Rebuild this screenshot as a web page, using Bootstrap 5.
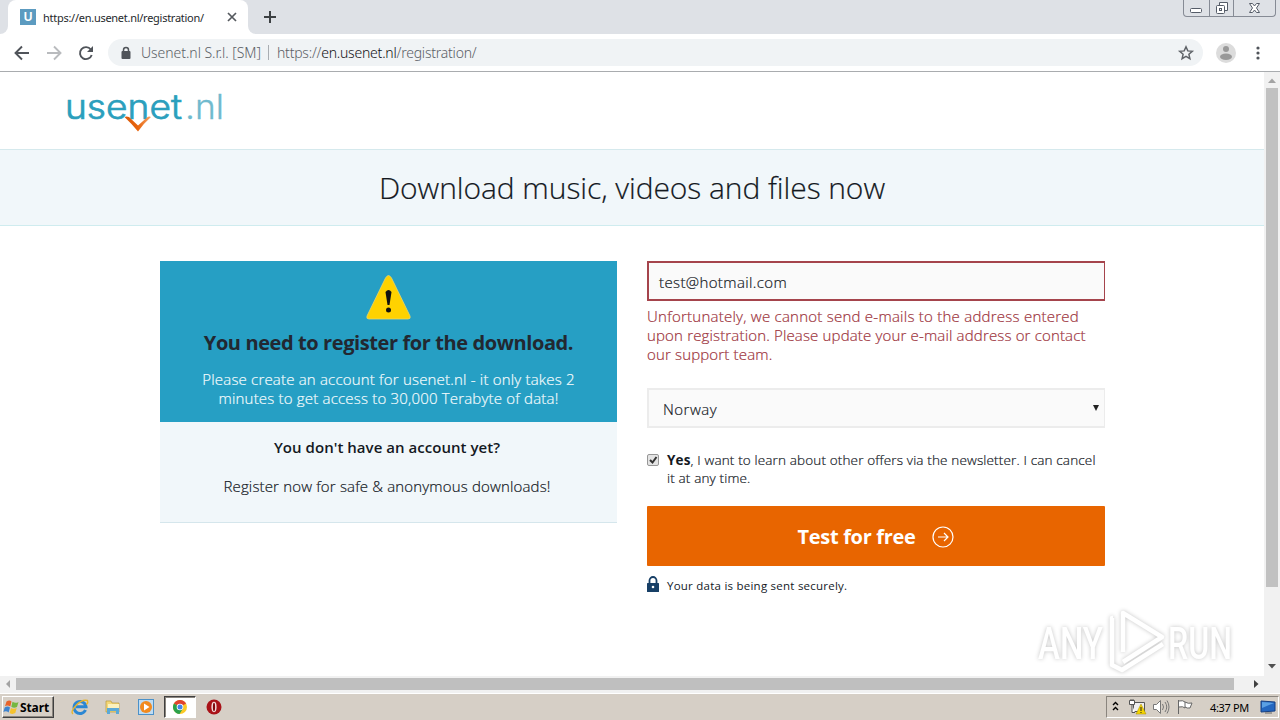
<!DOCTYPE html>
<html lang="en">
<head>
    <meta charset="UTF-8">
    <meta name="viewport" content="width=device-width, initial-scale=1.0">
    <title>Registration</title>
    <link href="https://cdn.jsdelivr.net/npm/bootstrap@5.3.0/dist/css/bootstrap.min.css" rel="stylesheet">
    <style>
        body { width: 1280px; height: 720px; overflow: hidden; background: #fff; color: #14191f; font-family: "Open Sans", "Noto Sans", sans-serif; font-weight: 300; font-size: 15px; line-height: 19px; }
        svg { display: block; flex: none; overflow: visible; }
        .ui-font { font-family: "Noto Sans", "DejaVu Sans", sans-serif; }
        .fit { display: inline-block; white-space: nowrap; }
        main { -webkit-text-stroke: .2px; }
        main b, main h2, main .fw-semibold, .btn-free, .secure-row, main svg { -webkit-text-stroke: 0; }

        /* Browser */
        .tab-strip { height: 34px; background: #dee1e6; }
        .tab-corner { flex: none; width: 8px; background: #fff; }
        .tab-corner i { display: block; height: 34px; background: #dee1e6; border-radius: 0 0 8px 0; }
        .tab-corner.right-side i { border-radius: 0 0 0 8px; }
        .browser-tab { flex: none; width: 240px; height: 34px; padding: 0 8px 0 12px; background: #fff; border-radius: 8px 8px 0 0; font-size: 11px; font-weight: 400; color: #26292c; letter-spacing: -.27px; }
        .site-icon { flex: none; width: 16px; height: 16px; margin-right: 7px; background: #5c9bc0; color: #fff; font: bold 12px/16px "Liberation Sans", sans-serif; text-align: center; }
        .new-tab { margin: 8px 0 0 8px; }
        .win-buttons { width: 93px; height: 17px; margin-right: 4px; border: 1px solid #868b95; border-top: 0; border-radius: 0 0 4px 4px; }
        .win-buttons > span { width: 25px; }
        .win-buttons > span + span { border-left: 1px solid #868b95; }
        .win-buttons > span:last-child { width: 42px; }
        .toolbar-row { height: 38px; border-bottom: 1px solid #a9acaf; }
        .address-bar { width: 1095px; height: 27px; margin-left: 15px; padding: 0 9px 0 13px; border-radius: 14px; background: #f0f3f5; font-size: 14px; color: #5b6066; }
        .owner-name { margin-left: 10px; letter-spacing: -.04px; }
        .bar-line { width: 1px; height: 15px; background: #a9adb2; margin: 0 8px 0 7px; }
        .page-url { letter-spacing: -.22px; }
        .page-url span { color: #101114; }
        .avatar-icon { margin: 0 20px 0 13px; }

        /* Page */
        .viewport-row { height: 604px; }
        .site-head { height: 78px; border-bottom: 1px solid #d5e9ed; padding: 20px 0 0 64px; }
        .title-band { height: 76px; background: #f1f7fa; border-bottom: 1px solid #cfecef; }
        .title-band h1 { font-size: 30px; font-weight: 300; line-height: 36px; margin: 1px 0 0; letter-spacing: -.08px; }
        .content-area { padding: 35px 159px 0 160px; gap: 30px; }
        .info-col { width: 457px; }
        .info-blue { height: 161px; background: #269fc4; color: #f3fbfd; padding-top: 12px; letter-spacing: .19px; }
        .info-blue h2 { font-size: 20px; font-weight: 700; line-height: 26px; color: #222831; margin: 10px 0 14px; letter-spacing: -.4px; }
        .info-light { height: 101px; background: #f1f7fa; border-bottom: 1px solid #d5e6ec; padding: 16px 3px 0 0; letter-spacing: .16px; }
        .info-light .fw-semibold { margin-bottom: 20px; letter-spacing: .04px; }
        .form-col { width: 458px; }
        .mail-box { height: 40px; border: 2px solid #a5444c; border-right-width: 1px; background: #fafafa; padding: 2px 0 0 10px; letter-spacing: .38px; }
        .error-text { color: #9d343d; margin-top: 6px; height: 57px; letter-spacing: .16px; }
        .error-text .first-line { letter-spacing: .246px; }
        .country-box { height: 40px; margin-top: 24px; border: 2px solid #ececec; border-right-width: 1px; background: #fafafa; padding: 2px 5px 0 14px; letter-spacing: .48px; }
        .news-row { margin-top: 23px; height: 36px; font-size: 13.5px; line-height: 18px; letter-spacing: .15px; }
        .news-row b { font-weight: 700; }
        .tick-box { width: 12px; height: 12px; margin: 3px 8px 0 0; border: 1px solid #979797; border-radius: 2px; background: #e4e4e4; }
        .btn-free { height: 60px; margin-top: 19px; background: #e86500; color: #fff; font-size: 20px; font-weight: 700; border-radius: 1px; gap: 17px; letter-spacing: -.32px; }
        .btn-free svg { margin-top: 1px; }
        .secure-row { margin-top: 10px; font-size: 11.5px; font-weight: 400; gap: 8px; letter-spacing: .24px; }
        .secure-row svg { margin-top: -4px; }
        .watermark { position: absolute; left: 1030px; top: 603px; filter: drop-shadow(0 0 2px #c4c4c4); }

        /* Scrollbars */
        .v-scroll { flex: none; width: 16px; background: #f1f1f1; }
        .v-thumb { width: 12px; height: 499px; background: #c1c1c1; }
        .h-scroll { height: 17px; background: #f1f1f1; padding: 0 16px 2px 0; }
        .h-thumb { width: 1218px; height: 12px; background: #bfbfbf; }

        /* Taskbar */
        .task-bar { height: 27px; background: #d6cfc6; border-top: 1px solid #fff; color: #000; }
        .start-btn { width: 52px; height: 22px; margin: 0 17px 0 2px; border: 1px solid #fff; border-right-color: #404040; border-bottom-color: #404040; box-shadow: inset -1px -1px #8a857e; font-size: 12px; font-weight: 700; letter-spacing: -.1px; }
        .quick-icons { gap: 15px; }
        .active-app { width: 32px; height: 22px; margin: 0 10px 0 9px; background: #fff; border: 1px solid #404040; border-right-color: #fff; border-bottom-color: #fff; box-shadow: inset 1px 1px #8a857e; }
        .tray { width: 173px; height: 22px; margin-right: 1px; padding-right: 2px; border: 1px solid #8a857e; border-right-color: #fff; border-bottom-color: #fff; font-weight: 400; font-size: 11px; letter-spacing: -.33px; }
        .clock { margin: 0 11px 0 auto; }
    </style>
</head>
<body>
<!-- Tab strip -->
<div class="tab-strip d-flex ui-font">
    <div class="tab-corner"><i></i></div>
    <div class="browser-tab d-flex align-items-center">
        <div class="site-icon">U</div>
        <span class="fit">https://en.usenet.nl/registration/</span>
        <svg class="ms-auto" width="16" height="16" viewBox="0 0 16 16"><path d="M4 4l8 8M12 4l-8 8" stroke="#55595e" stroke-width="1.700"/></svg>
    </div>
    <div class="tab-corner right-side"><i></i></div>
    <svg class="new-tab" width="18" height="18" viewBox="0 0 18 18"><path d="M6 3v12M0 9h12" stroke="#3c4043" stroke-width="2"/></svg>
    <div class="win-buttons d-flex ms-auto">
        <span class="d-flex justify-content-center"><svg width="14" height="16"><rect x="1.500" y="8.500" width="11" height="4" rx="1" fill="#fff" stroke="#555c68"/></svg></span>
        <span class="d-flex justify-content-center"><svg width="14" height="16"><path d="M4.500 5.500v-3h8v8h-3" fill="#fff" stroke="#555c68"/><rect x="1.500" y="5.500" width="8" height="8" rx="1" fill="#fff" stroke="#555c68"/><rect x="4.500" y="8.500" width="2" height="2" fill="none" stroke="#555c68"/></svg></span>
        <span class="d-flex justify-content-center"><svg width="14" height="16"><path d="M1.500 3.500h3l2 2.500 2-2.500h3l-3 4.500 3 4.500h-3l-2-2.500-2 2.500h-3l3-4.500z" fill="#fff" stroke="#555c68"/></svg></span>
    </div>
</div>

<!-- Toolbar -->
<div class="toolbar-row d-flex align-items-center ui-font">
    <svg width="93" height="20" viewBox="0 0 93 20" fill="none" stroke-width="1.900">
        <path d="M29 10H16M22 3.500L15.500 10l6.500 6.500" stroke="#50545a"/>
        <path d="M47 10h13M54 3.500l6.500 6.500-6.500 6.500" stroke="#b9bbbe"/>
        <path d="M90.800 6.500A6 6 0 1 0 91.700 12" stroke="#50545a"/>
        <path d="M93 3v6h-6z" fill="#50545a"/>
    </svg>
    <div class="address-bar d-flex align-items-center">
        <svg width="10" height="14" viewBox="0 0 10 14"><path d="M2.500 6V4a2.500 2.500 0 0 1 5 0v2" fill="none" stroke="#50545a" stroke-width="1.500"/><rect x=".5" y="5" width="9" height="8" rx="1" fill="#50545a"/></svg>
        <span class="fit owner-name">Usenet.nl S.r.l. [SM]</span>
        <span class="bar-line"></span>
        <span class="fit page-url">https://<span>en.usenet.nl</span>/registration/</span>
        <svg class="ms-auto" width="16" height="16" viewBox="0 0 16 16"><path d="M8 1.800l1.800 4.100 4.500.4-3.400 3 1 4.400L8 11.400l-3.900 2.300 1-4.400-3.400-3 4.500-.4z" fill="none" stroke="#5f6368" stroke-width="1.500"/></svg>
    </div>
    <svg class="avatar-icon" width="20" height="20"><circle cx="10" cy="10" r="10" fill="#dcdcdc"/><circle cx="10" cy="6" r="3" fill="#999"/><ellipse cx="10" cy="13.800" rx="6" ry="3.200" fill="#999"/></svg>
    <svg width="4" height="16" fill="#50545a"><circle cx="2" cy="3" r="1.600"/><circle cx="2" cy="8" r="1.600"/><circle cx="2" cy="13" r="1.600"/></svg>
</div>

<div class="viewport-row d-flex">
    <main class="flex-grow-1">
        <div class="site-head">
            <svg width="164" height="44" viewBox="0 0 164 44" font-family="Inter, sans-serif" font-weight="300" font-size="34">
                <defs><linearGradient id="arrowFill"><stop offset="0" stop-color="#d95a0b"/><stop offset=".5" stop-color="#e8640c"/><stop offset="1" stop-color="#f5a468"/></linearGradient></defs>
                <text x="1" y="27" textLength="117" lengthAdjust="spacingAndGlyphs" fill="#2b9fbd" stroke="#2b9fbd" stroke-width=".7">usenet</text>
                <text x="121" y="27" textLength="39" lengthAdjust="spacingAndGlyphs" fill="#70bace" stroke="#70bace" stroke-width=".3">.nl</text>
                <path d="M60.500 25q2-1 4.500 0L74 33.500L83 25.500q2-1.500 4-.5Q80 31 74 39.500Q68 32 60.500 25z" fill="url(#arrowFill)"/>
            </svg>
        </div>
        <div class="title-band d-flex align-items-center justify-content-center">
            <h1 class="fit">Download music, videos and files now</h1>
        </div>
        <div class="content-area d-flex align-items-start">
            <section class="info-col text-center">
                <div class="info-blue">
                    <svg class="mx-auto" width="48" height="47" viewBox="0 0 48 47">
                        <path d="M20.500 5q3-5 6 0L45 43q1 3-2 3H4q-3 0-2-3z" fill="#ffd200" stroke="#e8d56a" stroke-width=".8"/>
                        <path d="M20.500 19q3-4 6 0l-2 13h-2z" fill="#111"/><circle cx="23.500" cy="37" r="2.500" fill="#111"/>
                    </svg>
                    <h2><span class="fit">You need to register for the download.</span></h2>
                    <div><span class="fit">Please create an account for usenet.nl - it only takes 2</span></div>
                    <div><span class="fit">minutes to get access to 30,000 Terabyte of data!</span></div>
                </div>
                <div class="info-light">
                    <div class="fw-semibold"><span class="fit">You don't have an account yet?</span></div>
                    <div><span class="fit">Register now for safe &amp; anonymous downloads!</span></div>
                </div>
            </section>
            <form class="form-col">
                <div class="mail-box d-flex align-items-center"><span class="fit">test@hotmail.com</span></div>
                <div class="error-text">
                    <div class="first-line"><span class="fit">Unfortunately, we cannot send e-mails to the address entered</span></div>
                    <div><span class="fit">upon registration. Please update your e-mail address or contact</span></div>
                    <div><span class="fit">our support team.</span></div>
                </div>
                <div class="country-box d-flex align-items-center justify-content-between">
                    <span class="fit">Norway</span>
                    <svg width="6" height="10"><path d="M0 1h6L3 7z" fill="#222"/></svg>
                </div>
                <div class="news-row d-flex align-items-start">
                    <span class="tick-box"><svg width="10" height="10" viewBox="0 0 10 10"><path d="M2 5l2.500 2.500L8.500 2" fill="none" stroke="#333" stroke-width="2"/></svg></span>
                    <div>
                        <div><span class="fit"><b>Yes</b>, I want to learn about other offers via the newsletter. I can cancel</span></div>
                        <div><span class="fit">it at any time.</span></div>
                    </div>
                </div>
                <div class="btn-free d-flex align-items-center justify-content-center">
                    <span class="fit">Test for free</span>
                    <svg width="22" height="22" viewBox="0 0 22 22" fill="none" stroke="#fff" stroke-width="1.200"><circle cx="11" cy="11" r="10"/><path d="M6 11h10M12 7l4 4-4 4"/></svg>
                </div>
                <div class="secure-row d-flex align-items-center">
                    <svg width="12" height="16" viewBox="0 0 12 16"><path d="M2.500 8V4.500a3.500 3.500 0 0 1 7 0V8" fill="none" stroke="#173f66" stroke-width="1.800"/><rect y="7" width="12" height="9" rx=".5" fill="#173f66"/><circle cx="6" cy="11" r="1.300" fill="#fff"/></svg>
                    <span class="fit">Your data is being sent securely.</span>
                </div>
            </form>
        </div>
    </main>
    <div class="v-scroll d-flex flex-column align-items-center">
        <svg width="16" height="16"><path d="M4 11l4-4.500 4 4.500z" fill="#a3a3a3"/></svg>
        <div class="v-thumb"></div>
        <svg class="mt-auto" width="16" height="17"><path d="M4 5h8l-4 4.500z" fill="#505050"/></svg>
    </div>
</div>

<div class="h-scroll d-flex align-items-center">
    <svg width="16" height="16"><path d="M10 4v8L6 8z" fill="#a3a3a3"/></svg>
    <div class="h-thumb"></div>
    <svg class="ms-auto" width="16" height="16"><path d="M6 4v8l4.500-4z" fill="#404040"/></svg>
</div>

<!-- Taskbar -->
<div class="task-bar d-flex align-items-center ui-font">
    <div class="start-btn d-flex align-items-center">
        <svg width="17" height="18" viewBox="0 0 17 18"><path d="M3.500 3.500q3-2 5 0L7.300 8.500q-3-2-5.300-.3z" fill="#e8632a"/><path d="M9.500 3.800q3 2 6 .2l-1.500 5q-3 1.500-5.700-.2z" fill="#76b741"/><path d="M1.700 9.400q3-1.700 5.300 0l-1.400 5q-2.500-2-5.200-.4z" fill="#3e83ce"/><path d="M8 9.900q3 1.700 5.700.2l-1.400 5q-3 1.700-5.700-.2z" fill="#f5c22d"/></svg>
        <span class="fit">Start</span>
    </div>
    <div class="quick-icons d-flex">
        <svg width="18" height="18" viewBox="0 0 18 18" fill="none"><path d="M14.500 12A6 6 0 1 1 15 8.800H5" stroke="#2b87d3" stroke-width="3"/><path d="M2 16Q-1 14 5 7.500T16.500 2.500q1 2-1 4" stroke="#e9b52b" stroke-width="1.400"/></svg>
        <svg width="18" height="18" viewBox="0 0 18 18"><path d="M2 3h5l1 2h7v9H2z" fill="#f3d778" stroke="#b99a3b" stroke-width=".7"/><path d="M4 6h11v4H4z" fill="#fbf1bd"/><path d="M3 16v-6h12v6h-3v-3H6v3z" fill="#5ba9d7"/></svg>
        <svg width="18" height="18" viewBox="0 0 18 18"><rect x="1.500" y="1.500" width="15" height="15" fill="#bfdcf2" stroke="#4b91c9"/><circle cx="9" cy="9" r="6" fill="#f28a1e"/><path d="M7 5.500l5.500 3.500L7 12.500z" fill="#fff"/></svg>
    </div>
    <div class="active-app d-flex align-items-center justify-content-center">
        <svg width="14" height="14" viewBox="0 0 14 14"><circle cx="7" cy="7" r="7" fill="#fbc926"/><path d="M7 7L.9 3.500A7 7 0 0 1 13.100 3.500z" fill="#e0432f"/><path d="M7 7L.9 3.500A7 7 0 0 0 6.500 14L10 8.500z" fill="#2ba14b"/><circle cx="7" cy="7" r="3.300" fill="#fff"/><circle cx="7" cy="7" r="2.500" fill="#4285e8"/></svg>
    </div>
    <svg width="16" height="16" viewBox="0 0 16 16"><circle cx="8" cy="8" r="7.500" fill="#a91218"/><ellipse cx="8" cy="8" rx="2.600" ry="5.200" fill="#f3dede"/><ellipse cx="8" cy="8" rx="1.100" ry="4.300" fill="#81080d"/></svg>
    <div class="tray d-flex align-items-center ms-auto">
        <svg width="96" height="20" viewBox="0 0 96 20" fill="none">
            <path d="M6 8l2.500-2.500L11 8M6 13l2.500-2.500L11 13" stroke="#000" stroke-width="1.400"/>
            <path d="M26.500 5.500h11v9h-11z" fill="#efefef" stroke="#555"/><path d="M22.500 3.500h5v4h-5zM25 7.500v8h3M24 2v2M26 2v2" stroke="#555" fill="#fff"/><path d="M34 7l5 10H29z" fill="#f5d400" stroke="#a58d00" stroke-width=".5"/><path d="M34 10v4M34 15v1" stroke="#222"/>
            <path d="M46.500 7.500h3l4-4v13l-4-4h-3z" fill="#fff" stroke="#777"/><path d="M55.500 7q2 3 0 6M58 5q3.500 5 0 10M60 3.500q4 6.500 0 13" stroke="#777"/>
            <path d="M71.500 3v14M72 4q4-1 6 1v6q-2-2-6-1M78 5q3 2 7 1l-2 5q-3 .5-5-1" fill="#fff" stroke="#666"/>
        </svg>
        <span class="fit clock">4:37 PM</span>
        <svg width="16" height="16" viewBox="0 0 16 16"><path d="M1 2l14 1v9l-14 1z" fill="#2467c0" stroke="#173f80"/><path d="M2 3l12 1-12 5z" fill="#5ba0e4"/><path d="M5 14h7" stroke="#666"/></svg>
    </div>
</div>

<!-- Watermark over the page -->
<svg class="watermark" width="220" height="74" viewBox="0 0 220 74">
    <g font-family="Roboto, sans-serif" font-size="45" font-weight="500" fill="#fff"><text x="8" y="56" textLength="65" lengthAdjust="spacingAndGlyphs">ANY</text><text x="138" y="56" textLength="64" lengthAdjust="spacingAndGlyphs">RUN</text></g>
    <path d="M93 49V10l39 24-39 25M83 15h-1v47l10 5 41-26" fill="none" stroke="#fff" stroke-width="4.500" stroke-linejoin="round"/>
</svg>

<script src="https://cdn.jsdelivr.net/npm/bootstrap@5.3.0/dist/js/bootstrap.bundle.min.js"></script>
</body>
</html>
